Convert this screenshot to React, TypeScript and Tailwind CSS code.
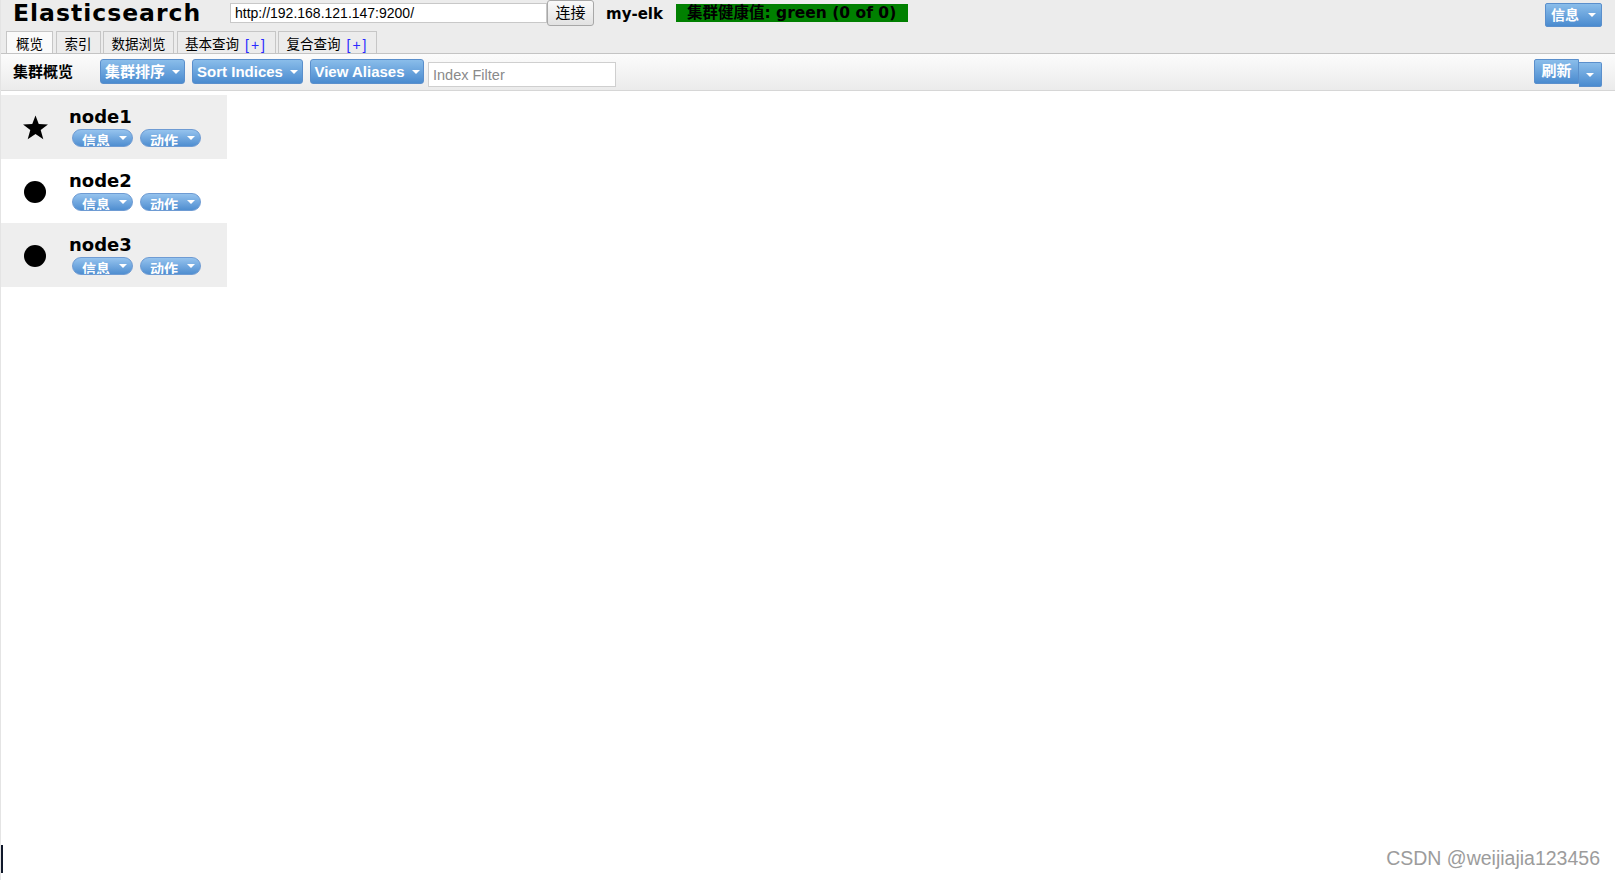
import React from "react";

const verdana = { fontFamily: '"DejaVu Sans", Verdana, "Noto Sans CJK SC", sans-serif' };
const arial = { fontFamily: '"Liberation Sans", Arial, "Noto Sans CJK SC", sans-serif' };

function Caret() {
  return (
    <span className="block h-0 w-0 border-l-[4px] border-r-[4px] border-t-[4px] border-l-transparent border-r-transparent border-t-white" />
  );
}

function BlueButton({ label, width }: { label: string; width: string }) {
  return (
    <button
      className={`${width} flex h-[25px] items-center justify-center gap-[7px] rounded-[3px] border border-[#5a8fcc] bg-linear-to-b from-[#8abdea] to-[#4a8bcf] text-[15px] font-bold leading-[24px] text-white`}
      style={arial}
    >
      <span>{label}</span>
      <Caret />
    </button>
  );
}

function Pill({ label }: { label: string }) {
  return (
    <button
      className="flex h-[18px] w-[61px] items-start gap-[9px] overflow-hidden rounded-full border border-[#6e9bd3] bg-linear-to-b from-[#95c3ee] to-[#4f8ed0] pl-[9px] text-[14px] font-bold text-white"
      style={arial}
    >
      <span className="pt-[2px] leading-[18px]">{label}</span>
      <span className="self-center">
        <Caret />
      </span>
    </button>
  );
}

const tabs = [
  { label: "概览", w: "w-[47px]", active: true },
  { label: "索引", w: "w-[45px]" },
  { label: "数据浏览", w: "w-[71px]" },
  { label: "基本查询", w: "w-[99px]", plus: true },
  { label: "复合查询", w: "w-[99px]", plus: true },
];

const nodes = [
  { name: "node1", master: true },
  { name: "node2" },
  { name: "node3" },
];

export default function App() {
  return (
    <div className="relative min-h-[880px] border-l border-[#e4e4e4] bg-white text-black">
      {/* header */}
      <div className="border-b border-[#c4c4c4] bg-[#ececec]">
        <div className="flex h-[31px] items-start">
          <div
            className="w-[229px] pl-[12px] text-[23.5px] font-bold leading-[27px] tracking-[1px]"
            style={verdana}
          >
            Elasticsearch
          </div>
          <input
            className="mt-[3px] h-[20px] w-[317px] border border-[#c8c8c8] bg-white px-[4px] text-[14px] outline-none"
            style={arial}
            defaultValue="http://192.168.121.147:9200/"
          />
          <button
            className="h-[26px] w-[47px] rounded-[3px] border border-[#a8a8a8] bg-linear-to-b from-[#fafafa] to-[#e2e2e2] text-[15px]"
            style={arial}
          >
            连接
          </button>
          <div className="ml-[12px] mt-[5px] w-[70px] text-[15px] font-bold leading-[18px]" style={verdana}>
            my-elk
          </div>
          <div
            className="mt-[4px] flex h-[18px] w-[232px] items-center bg-[#008000] pl-[11px] text-[15.5px] font-bold leading-[18px] text-black"
            style={verdana}
          >
            集群健康值: green (0 of 0)
          </div>
          <div className="flex-1" />
          <button
            className="mr-[13px] mt-[3px] flex h-[24px] w-[57px] items-center justify-center gap-[9px] rounded-[2px] border border-[#5a8fcc] bg-linear-to-b from-[#8abdea] to-[#4a8bcf] text-[14px] font-bold text-white"
            style={arial}
          >
            <span>信息</span>
            <Caret />
          </button>
        </div>
        <div className="flex h-[22px] items-end gap-[2.5px] pl-[5px]">
          {tabs.map((t) => (
            <div
              key={t.label}
              className={`${t.w} flex h-[22px] items-center justify-center border border-b-0 border-[#c6c6c6] pt-[4px] text-[13.5px] leading-[18px] ${
                t.active ? "bg-[#fafafa]" : "bg-[#ececec]"
              }`}
              style={arial}
            >
              {t.label}
              {t.plus && (
                <span className="ml-[6px] text-[14px] tracking-[2px] text-[#2a2aff]">[+]</span>
              )}
            </div>
          ))}
        </div>
      </div>

      {/* toolbar */}
      <div className="flex h-[37px] items-start border-b border-[#d6d6d6] bg-linear-to-b from-[#fcfcfc] to-[#ebebeb]">
        <div className="ml-[12px] mt-[9px] w-[87px] text-[15px] font-bold leading-[18px]" style={arial}>
          集群概览
        </div>
        <div className="mt-[5px] flex gap-[7px]">
          <BlueButton label="集群排序" width="w-[85px]" />
          <BlueButton label="Sort Indices" width="w-[111px]" />
          <BlueButton label="View Aliases" width="w-[114px]" />
        </div>
        <input
          className="ml-[4px] mt-[8px] h-[25px] w-[188px] border border-[#cfcfcf] bg-white px-[4px] text-[14.5px] outline-none placeholder:text-[#8a8a8a]"
          style={arial}
          placeholder="Index Filter"
        />
        <div className="flex-1" />
        <div className="mr-[13px] mt-[5px] flex items-start">
          <button
            className="h-[25px] w-[45px] rounded-l-[2px] border border-[#5a8fcc] bg-linear-to-b from-[#8abdea] to-[#4a8bcf] text-[15px] font-bold text-white"
            style={arial}
          >
            刷新
          </button>
          <button className="mt-[3px] flex h-[25px] w-[23px] items-center justify-center rounded-r-[2px] border border-l-0 border-[#5a8fcc] bg-linear-to-b from-[#8abdea] to-[#4a8bcf]">
            <Caret />
          </button>
        </div>
      </div>

      {/* nodes */}
      <div className="mt-[4px] w-[226px]">
        {nodes.map((n, i) => (
          <div key={n.name} className={`flex h-[64px] ${i % 2 === 0 ? "bg-[#eeeeee]" : "bg-white"}`}>
            <div className="flex w-[68px] items-center justify-center pt-[2px]">
              {n.master ? (
                <svg width="27" height="26" viewBox="0 0 24 24">
                  <polygon
                    points="12,0.5 15,8.4 23.5,8.7 16.8,13.9 19.2,22.3 12,17.5 4.8,22.3 7.2,13.9 0.5,8.7 9,8.4"
                    fill="black"
                  />
                </svg>
              ) : (
                <span className="block h-[22px] w-[22px] rounded-full bg-black" />
              )}
            </div>
            <div className="pt-[11px]">
              <div className="text-[18px] font-bold leading-[21px]" style={verdana}>
                {n.name}
              </div>
              <div className="ml-[3px] mt-[2px] flex gap-[7px]">
                <Pill label="信息" />
                <Pill label="动作" />
              </div>
            </div>
          </div>
        ))}
      </div>

      {/* watermark */}
      <div className="absolute bottom-[7px] right-[15px] text-[19.5px] text-[#9c9c9c]" style={arial}>
        CSDN @weijiajia123456
      </div>
      <div className="absolute bottom-[7px] left-0 h-[28px] w-[2px] bg-[#10182a]" />
    </div>
  );
}
